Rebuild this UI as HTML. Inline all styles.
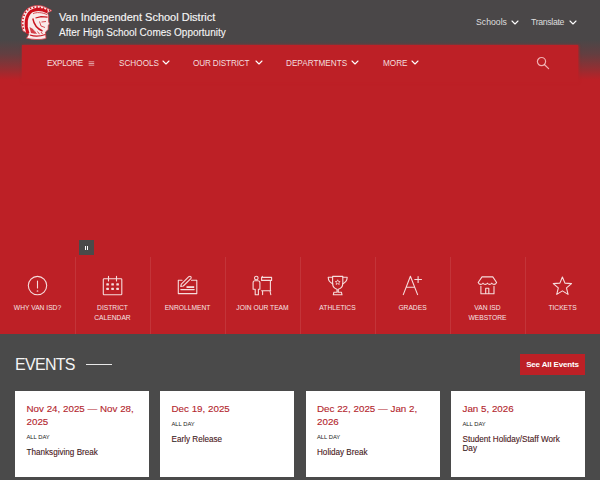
<!DOCTYPE html>
<html><head><meta charset="utf-8">
<style>
*{box-sizing:border-box;margin:0;padding:0}
html,body{width:600px;height:480px;overflow:hidden}
body{font-family:"Liberation Sans",sans-serif;background:#4a4a4a;position:relative}
.hero{position:absolute;left:0;top:0;width:600px;height:334px;background:#bd2026}
.hdr{position:absolute;left:0;top:0;width:600px;height:80px;background:linear-gradient(to bottom,#4a4748 0px,#4a4748 40px,rgba(74,71,72,.78) 54px,rgba(74,71,72,.42) 67px,rgba(74,71,72,0) 80px)}
.logo{position:absolute;left:20px;top:4px;width:33px;height:36px}
.t1{position:absolute;left:59px;top:11px;font-size:11px;color:#f6f6f6;-webkit-text-stroke:.15px #f6f6f6;white-space:nowrap;line-height:13px}
.t2{position:absolute;left:59px;top:27px;font-size:10px;color:#f6f6f6;-webkit-text-stroke:.1px #f6f6f6;white-space:nowrap;line-height:12px}
.util{position:absolute;top:17px;font-size:8.7px;color:#dedede;white-space:nowrap;line-height:10px}
.chev{position:absolute}
.nav{position:absolute;left:21.5px;top:44.5px;width:556.5px;height:37px;background:#bd2026;box-shadow:0 0 2px 0.5px rgba(189,32,38,.9)}
.ni{position:absolute;top:59px;font-size:8.2px;color:#f3dede;white-space:nowrap;line-height:10px}
.pause{position:absolute;left:79px;top:240px;width:15px;height:15px;background:#4a4a4a}
.ql{position:absolute;top:257px;height:77px;width:75px;text-align:center;color:#f6e4e4}
.ql .div{position:absolute;right:-1px;top:0;width:1px;height:77px;background:rgba(255,255,255,.09)}
.ql svg{position:absolute;left:27px;top:18px;width:21px;height:21px}
.ql .lb{position:absolute;left:0;width:75px;top:46px;font-size:6.7px;line-height:9.5px}
.ev{position:absolute;left:0;top:334px;width:600px;height:146px;background:#4a4a4a}
.evt{position:absolute;left:15px;top:355px;font-size:16px;letter-spacing:-.7px;color:#f4f4f4;line-height:19px}
.evl{position:absolute;left:86px;top:364px;width:26px;height:1px;background:#e8e8e8}
.btn{position:absolute;left:520px;top:354px;width:65px;height:21px;background:#bd2026;color:#fff;font-weight:bold;font-size:8px;letter-spacing:-.15px;line-height:21px;text-align:center}
.card{position:absolute;top:391px;width:134px;height:86px;background:#fff}
.dt{position:absolute;left:11.5px;top:11.4px;width:111px;font-size:9.8px;line-height:13px;color:#b3252d;-webkit-text-stroke:.12px #b3252d}
.ad{font-size:5.8px;color:#222;-webkit-text-stroke:0;line-height:8px;margin-top:4.6px}
.tl{font-size:8.15px;color:#222;line-height:9.4px;margin-top:6.6px}
</style></head>
<body>
<div class="hero"></div>
<div class="hdr"></div>
<svg class="logo" viewBox="18 2 36 42" style="left:18px;top:2px;width:36px;height:42px">
<path d="M23,31 C20,24 21,14 27,9 C32,5 40,4.5 45,7 L52,10.6 L47.5,12.8 L48.6,16 L48.6,21.5 L49.4,23.8 L48.3,25.6 L48.2,29.5 L45.5,32 L46,38.5 C40,40.2 32,39.6 26.5,38.2 L29,34 Z" fill="#f9eaea" stroke="#d23c46" stroke-width=".8"/>
<path d="M23.6,29 C21.5,22 23,13.8 28.2,9.4 C33,6.2 41,6.2 50,10.6" fill="none" stroke="#d01a24" stroke-width="1.6" stroke-dasharray="1.5 1.8"/>
<path d="M28,33.5 C24.5,24.5 26,15.3 31.2,11.3 C36,8.6 42,9 47.5,12" fill="none" stroke="#cc101c" stroke-width="3"/>
<path d="M33,13.8 C36,12 42,12.2 47,14.6" fill="none" stroke="#d84a52" stroke-width="1"/>
<path d="M35.5,18 L41,16.6 L47.6,17.2" fill="none" stroke="#c8141e" stroke-width="1.2"/>
<path d="M32.8,18.5 C33.8,24 36.5,28.5 42.5,31" fill="none" stroke="#c8141e" stroke-width="1.4"/>
<path d="M39.5,21.5 L41,26 L45,27.5 M41.5,22 L46,21.5" fill="none" stroke="#d84a52" stroke-width="1"/>
<path d="M29.5,27 L31,33 L36,34 L33,29 Z" fill="#c8141e" opacity=".8"/>
<path d="M30,35 C34,36.5 40,36.5 45.5,34.5" fill="none" stroke="#c8141e" stroke-width="1.2"/>
<path d="M34,30.5 L36.5,33.8 M37.5,31.5 L39.5,34.2 M41,32 L42.5,34" fill="none" stroke="#d84a52" stroke-width="1"/>
</svg>
<div class="t1">Van Independent School District</div>
<div class="t2">After High School Comes Opportunity</div>
<div class="util" style="left:476px">Schools</div>
<div class="util" style="left:531px;letter-spacing:-.32px">Translate</div>
<div class="nav"></div>
<div class="ni" style="left:47px;letter-spacing:-.4px">EXPLORE</div>
<div class="ni" style="left:119px">SCHOOLS</div>
<div class="ni" style="left:193px;letter-spacing:-.15px">OUR DISTRICT</div>
<div class="ni" style="left:286px">DEPARTMENTS</div>
<div class="ni" style="left:383px">MORE</div>
<svg class="chev" style="left:161.5px;top:60px" width="8" height="5" viewBox="0 0 8 5"><path d="M1 1L4 4L7 1" stroke="#fff" stroke-width="1.1" fill="none" stroke-linecap="round" stroke-linejoin="round"/></svg><svg class="chev" style="left:254.5px;top:60px" width="8" height="5" viewBox="0 0 8 5"><path d="M1 1L4 4L7 1" stroke="#fff" stroke-width="1.1" fill="none" stroke-linecap="round" stroke-linejoin="round"/></svg><svg class="chev" style="left:351px;top:60px" width="8" height="5" viewBox="0 0 8 5"><path d="M1 1L4 4L7 1" stroke="#fff" stroke-width="1.1" fill="none" stroke-linecap="round" stroke-linejoin="round"/></svg><svg class="chev" style="left:411px;top:60px" width="8" height="5" viewBox="0 0 8 5"><path d="M1 1L4 4L7 1" stroke="#fff" stroke-width="1.1" fill="none" stroke-linecap="round" stroke-linejoin="round"/></svg><svg class="chev" style="left:510.5px;top:19.5px" width="8" height="5" viewBox="0 0 8 5"><path d="M1 1L4 4L7 1" stroke="#fff" stroke-width="1.1" fill="none" stroke-linecap="round" stroke-linejoin="round"/></svg><svg class="chev" style="left:569px;top:19.5px" width="8" height="5" viewBox="0 0 8 5"><path d="M1 1L4 4L7 1" stroke="#fff" stroke-width="1.1" fill="none" stroke-linecap="round" stroke-linejoin="round"/></svg><svg class="chev" style="left:88px;top:60px" width="7" height="7" viewBox="0 0 7 7"><path d="M.6 1.8H6.2M.6 3.5H6.2M.6 5.2H6.2" stroke="rgba(255,255,255,.55)" stroke-width="1"/></svg><svg class="chev" style="left:535px;top:55px" width="16" height="16" viewBox="0 0 16 16"><circle cx="6.5" cy="6.6" r="4.1" stroke="rgba(255,215,215,.78)" stroke-width="1.2" fill="none"/><path d="M9.6 9.8L13.6 13.6" stroke="rgba(255,215,215,.78)" stroke-width="1.2" stroke-linecap="round"/></svg>
<div class="pause"><div style="position:absolute;left:5.6px;top:5.5px;width:1.3px;height:4.6px;background:#fff"></div><div style="position:absolute;left:7.9px;top:5.5px;width:1.3px;height:4.6px;background:#fff"></div></div>

<div class="ql" style="left:0"><svg viewBox="0 0 21 21"><g stroke="#f6dcdc" stroke-width="1.1" fill="none" stroke-linecap="round" stroke-linejoin="round"><circle cx="10.5" cy="10.6" r="9.2"/><path d="M10.5 6V13"/><circle cx="10.5" cy="16" r=".3"/></g></svg><div class="div"></div><div class="lb">WHY VAN ISD?</div></div>
<div class="ql" style="left:75px"><svg viewBox="0 0 21 21"><g stroke="#f6dcdc" stroke-width="1.1" fill="none" stroke-linecap="round" stroke-linejoin="round"><rect x="1.3" y="3.8" width="18.5" height="16" rx=".8"/><path d="M6.5 1.2V6M14.5 1.2V6"/></g><g fill="#f6dcdc"><rect x="4.3" y="8.3" width="2.6" height="2.2" rx=".5"/><rect x="9.3" y="8.3" width="2.6" height="2.2" rx=".5"/><rect x="14.3" y="8.3" width="2.6" height="2.2" rx=".5"/><rect x="4.3" y="12.7" width="2.6" height="2.2" rx=".5"/><rect x="9.3" y="12.7" width="2.6" height="2.2" rx=".5"/><rect x="14.3" y="12.7" width="2.6" height="2.2" rx=".5"/></g></svg><div class="div"></div><div class="lb">DISTRICT<br>CALENDAR</div></div>
<div class="ql" style="left:150px"><svg viewBox="0 0 21 21"><g stroke="#f6dcdc" stroke-width="1.1" fill="none" stroke-linecap="round" stroke-linejoin="round"><path d="M5 5.3H1.3V18.6H19.8V5.3H14.5"/><path d="M3.7 11.5L4.3 9.2L11.8 1.7Q13 .8 13.9 1.7Q14.6 2.7 13.8 3.6L6.3 11Z"/><path d="M3.8 14.6H17.2"/></g><rect x="9.5" y="11.2" width="7.7" height="1.8" fill="#f6dcdc"/></svg><div class="div"></div><div class="lb">ENROLLMENT</div></div>
<div class="ql" style="left:225px"><svg viewBox="0 0 21 21"><g stroke="#f6dcdc" stroke-width="1.1" fill="none" stroke-linecap="round" stroke-linejoin="round"><circle cx="4.3" cy="3" r="1.8"/><path d="M3 5.7H5.7Q7.9 5.7 7.9 7.7V14.3H6.4V19.8H3.2V14.3H1.1V7.7Q1.1 5.7 3 5.7Z"/><path d="M9.6 2.4H19.6V5.4H9.6Z"/><path d="M18.4 5.6V15.8M9.6 15.8H18.8M10.6 16V19.6M18 16L18.8 19.6M10.3 1.3V2.4"/></g></svg><div class="div"></div><div class="lb">JOIN OUR TEAM</div></div>
<div class="ql" style="left:300px"><svg viewBox="0 0 21 21"><g stroke="#f6dcdc" stroke-width="1.1" fill="none" stroke-linecap="round" stroke-linejoin="round"><path d="M5.6 1.4H15.8V8.3Q15.8 13 11.3 14.3V17.2H14.4L15 19.8H6.3L6.9 17.2H10V14.3Q5.6 13 5.6 8.3Z"/><path d="M5.6 2.3H1.2Q1.3 6.8 5.9 9M15.8 2.3H20.2Q20.1 6.8 15.6 9"/></g><path d="M10.70,4.80 L11.41,6.43 L13.17,6.60 L11.84,7.77 L12.23,9.50 L10.70,8.60 L9.17,9.50 L9.56,7.77 L8.23,6.60 L9.99,6.43Z" fill="none" stroke="#f6dcdc" stroke-width=".8" stroke-linejoin="round"/></svg><div class="div"></div><div class="lb">ATHLETICS</div></div>
<div class="ql" style="left:375px"><svg viewBox="0 0 21 21"><g stroke="#f6dcdc" stroke-width="1.1" fill="none" stroke-linecap="round" stroke-linejoin="round"><path d="M1.3 19.6L8.4 1.3L15.6 19.6M4.2 12.2H12.6M16.1 1.5V7.5M12.8 4.5H19.5"/></g></svg><div class="div"></div><div class="lb">GRADES</div></div>
<div class="ql" style="left:450px"><svg viewBox="0 0 21 21"><g stroke="#f6dcdc" stroke-width="1.1" fill="none" stroke-linecap="round" stroke-linejoin="round"><path d="M5 1.9H15.8L19.6 7.5Q18.7 9.4 17.1 9.4Q15.6 9.4 14.8 8.2Q14 9.4 12.6 9.4Q11.2 9.4 10.4 8.2Q9.6 9.4 8.2 9.4Q6.8 9.4 6 8.2Q5.2 9.4 3.7 9.4Q2.1 9.4 1.2 7.5Z"/><path d="M3.9 11.2V18.7H17V11.2M8.7 18.7V13.3H11.8V18.7"/></g></svg><div class="div"></div><div class="lb">VAN ISD<br>WEBSTORE</div></div>
<div class="ql" style="left:525px"><svg viewBox="0 0 21 21"><g stroke="#f6dcdc" stroke-width="1.1" fill="none" stroke-linecap="round" stroke-linejoin="round"><path d="M10.40,2.00 L12.93,8.12 L19.53,8.63 L14.49,12.93 L16.04,19.37 L10.40,15.90 L4.76,19.37 L6.31,12.93 L1.27,8.63 L7.87,8.12Z"/></g></svg><div class="lb">TICKETS</div></div>

<div class="ev"></div>
<div class="evt">EVENTS</div>
<div class="evl"></div>
<div class="btn">See All Events</div>
<div class="card" style="left:15px"><div class="dt">Nov 24, 2025 — Nov 28, 2025<div class="ad">ALL DAY</div><div class="tl">Thanksgiving Break</div></div></div>
<div class="card" style="left:160px"><div class="dt">Dec 19, 2025<div class="ad">ALL DAY</div><div class="tl">Early Release</div></div></div>
<div class="card" style="left:305.5px"><div class="dt">Dec 22, 2025 — Jan 2, 2026<div class="ad">ALL DAY</div><div class="tl">Holiday Break</div></div></div>
<div class="card" style="left:451px"><div class="dt">Jan 5, 2026<div class="ad">ALL DAY</div><div class="tl">Student Holiday/Staff Work Day</div></div></div>
</body></html>
